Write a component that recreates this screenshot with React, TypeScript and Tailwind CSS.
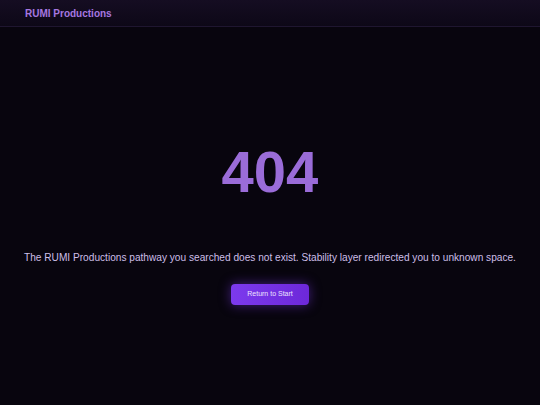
export default function App() {
  return (
    <div
      className="min-h-[405px] w-full bg-[#08050e] flex flex-col"
      style={{ fontFamily: '"Liberation Sans", Arial, sans-serif' }}
    >
      <header className="h-[27px] border-b border-[#1f1630] bg-gradient-to-b from-[#150d22] to-[#0d0817] flex items-center px-[25px]">
        <span className="text-[10px] font-bold text-[#a677e0]">RUMI Productions</span>
      </header>
      <main className="flex-1 flex flex-col items-center pt-[116px]">
        <h1 className="text-[58px] leading-none font-bold text-[#9a6cd8]">404</h1>
        <p className="mt-[52px] text-[10.15px] leading-none text-[#cdbfe8]">
          The RUMI Productions pathway you searched does not exist. Stability layer redirected you to unknown space.
        </p>
        <button className="mt-[21px] w-[78px] h-[21px] rounded-[4px] bg-gradient-to-r from-[#7c3aed] to-[#6d28d9] text-[7px] text-[#ece2ff] shadow-[0_0_12px_rgba(124,58,237,0.5)]">
          Return to Start
        </button>
      </main>
    </div>
  );
}
